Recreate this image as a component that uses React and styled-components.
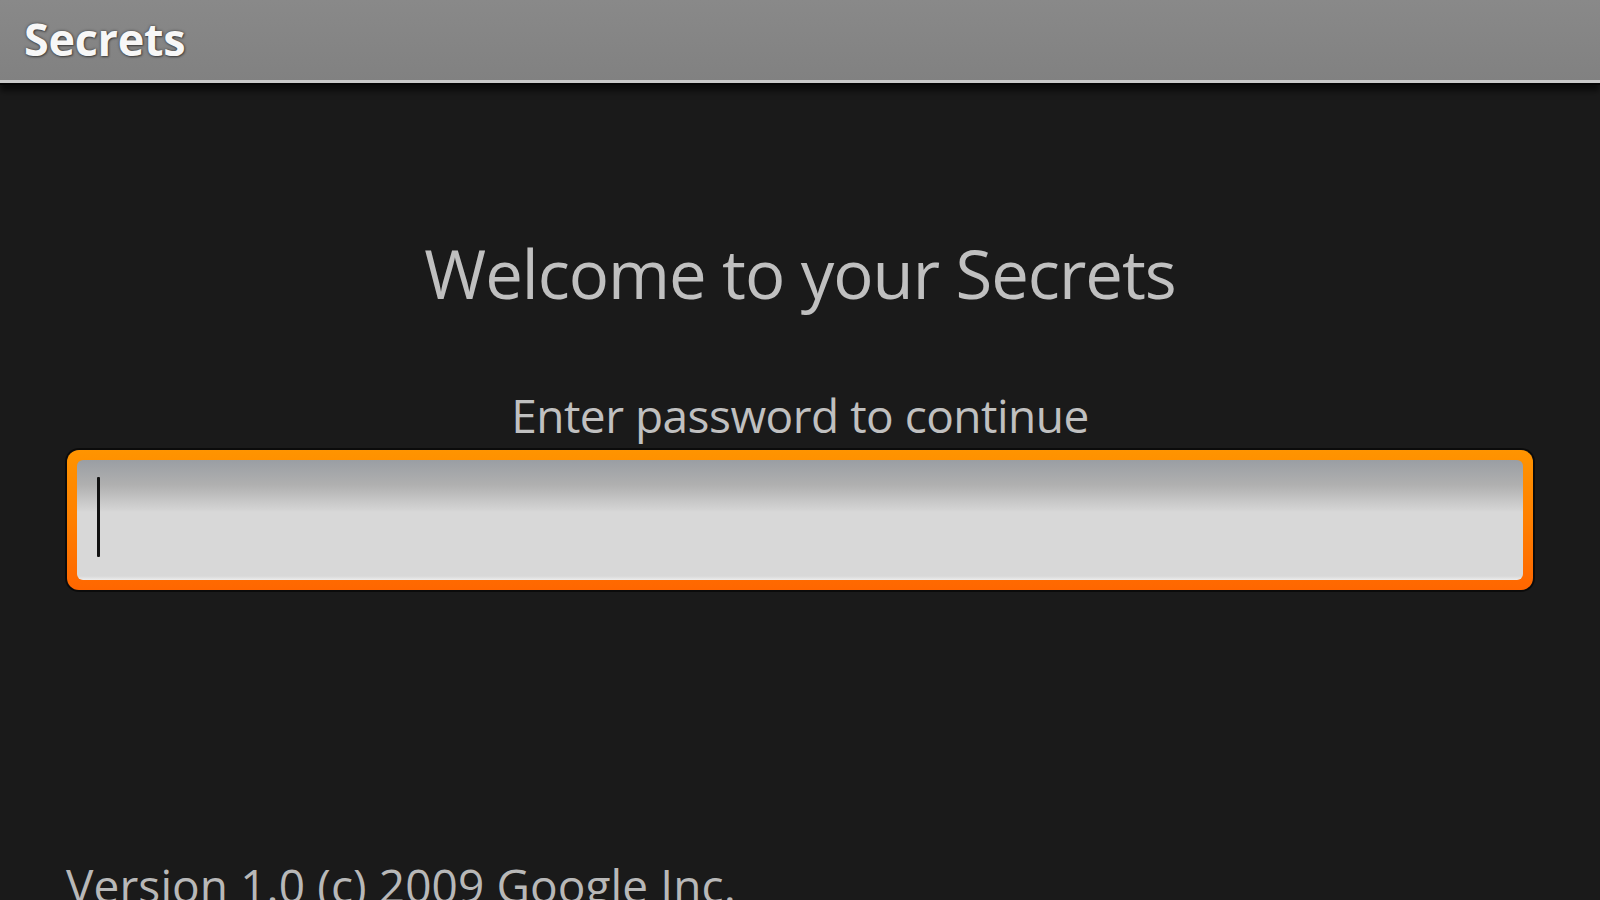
import React from "react";
import styled, { createGlobalStyle } from "styled-components";

const Global = createGlobalStyle`
  html, body { margin: 0; padding: 0; background: #1a1a1a; }
  body { font-family: "Open Sans", "DejaVu Sans", sans-serif; }
`;

const Screen = styled.div`
  width: 1600px;
  height: 900px;
  overflow: hidden;
  display: flex;
  flex-direction: column;
  background: #1a1a1a;
  & > * { flex-shrink: 0; }
`;

const TitleBar = styled.header`
  height: 83px;
  box-sizing: border-box;
  padding: 16px 0 0 24px;
  background: linear-gradient(#898989, #818181);
  border-bottom: 3px solid #c9c9c9;
  box-shadow: 0 2px 0 #050505, 0 8px 6px rgba(0, 0, 0, 0.6);
`;

const Title = styled.h1`
  margin: 0;
  font-family: "Open Sans", sans-serif;
  font-weight: 700;
  font-size: 45px;
  line-height: 45px;
  letter-spacing: -0.3px;
  color: #f7f7f7;
  text-shadow: 0 0 3px rgba(0, 0, 0, 0.55), 1px 1px 2px rgba(0, 0, 0, 0.4);
`;

const Content = styled.main`
  display: flex;
  flex-direction: column;
  align-items: center;
  padding-top: 157px;
`;

const Heading = styled.div`
  font-size: ${(p) => p.$size}px;
  line-height: 1;
  letter-spacing: ${(p) => p.$track}px;
  color: #c0c0c0;
  text-align: center;
  margin-bottom: ${(p) => p.$gap}px;
`;

const Field = styled.div`
  align-self: stretch;
  margin: 12px 67px 0;
  height: 140px;
  box-sizing: border-box;
  padding: 10px;
  border-radius: 12px;
  background: linear-gradient(#ff9400, #ff8000 50%, #ff6600);
  box-shadow: 0 0 0 2px rgba(0, 0, 0, 0.55);
`;

const FieldInner = styled.div`
  height: 100%;
  border-radius: 6px;
  box-sizing: border-box;
  padding: 17px 0 0 20px;
  background: linear-gradient(#9a9ea3 0px, #b0b0b0 25px, #d4d4d4 50px, #d8d8d8 52px, #d8d8d8 116px, #ececec 120px);
`;

const Caret = styled.div`
  width: 3px;
  height: 80px;
  background: #111;
  border-radius: 1px;
`;

const Footer = styled.footer`
  margin: 272px 0 0 66px;
  font-size: 46px;
  line-height: 1;
  letter-spacing: 0.1px;
  color: #b8b8b8;
  white-space: nowrap;
`;

export default function App() {
  return (
    <Screen>
      <Global />
      <TitleBar>
        <Title>Secrets</Title>
      </TitleBar>
      <Content>
        <Heading $size={67} $gap={85} $track={-1}>Welcome to your Secrets</Heading>
        <Heading $size={46} $gap={0} $track={-0.5}>Enter password to continue</Heading>
      </Content>
      <Field>
        <FieldInner>
          <Caret />
        </FieldInner>
      </Field>
      <Footer>Version 1.0 (c) 2009 Google Inc.</Footer>
    </Screen>
  );
}
